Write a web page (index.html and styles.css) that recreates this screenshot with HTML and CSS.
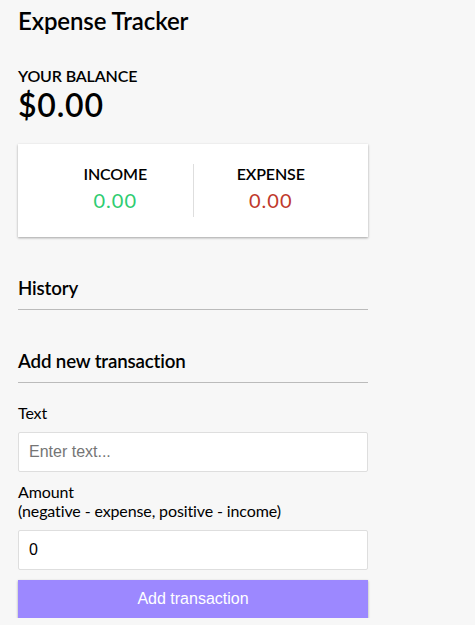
FILE: index.html
```html
<!DOCTYPE html>
<html lang="en">
<head>
  <meta charset="UTF-8" />
  <meta name="viewport" content="width=device-width, initial-scale=1.0" />
  <title>Expense Tracker</title>
  <link rel="stylesheet" href="styles.css">
</head>
<body>

  <div class="container">
    <h2>Expense Tracker</h2>

    <h4>Your Balance</h4>
    <h1 id="balance">$0.00</h1>

    <div class="inc-exp-container">
      <div>
        <h4>Income</h4>
        <p id="money-plus" class="money plus">0.00</p>
      </div>
      <div>
        <h4>Expense</h4>
        <p id="money-minus" class="money minus">0.00</p>
      </div>
    </div>

    <h3>History</h3>
    <ul id="list" class="list"></ul>

    <h3>Add new transaction</h3>
    <form id="form">
      <div class="form-control">
        <label for="text">Text</label>
        <input type="text" id="text" placeholder="Enter text..." />
      </div>
      <div class="form-control">
        <label for="amount">Amount <br />(negative - expense, positive - income)</label>
        <input type="number" id="amount" placeholder="Enter amount..." value="0" />
      </div>
      <button class="btn">Add transaction</button>
    </form>
  </div>

</body>
</html>
```

FILE: styles.css
```css
* {
  box-sizing: border-box;
}

body {
  background-color: #f7f7f7;
  margin: 0;
  font-family: 'Lato', sans-serif;
  color: #000;
}

.container {
  width: 350px;
  margin: 0 18px;
  padding-top: 6px;
}

h1,
h2,
h3,
h4 {
  font-weight: 600;
}

h1 {
  font-size: 32px;
  letter-spacing: 0.8px;
  margin: 0;
}

h2 {
  font-size: 24px;
  letter-spacing: -0.1px;
  margin: 0 0 31px;
}

h3 {
  font-size: 18.72px;
  letter-spacing: -0.15px;
  border-bottom: 1px solid #bbb;
  padding-bottom: 10px;
  margin: 40px 0 10px;
}

h4 {
  font-size: 16px;
  margin: 0;
  text-transform: uppercase;
  letter-spacing: -0.15px;
}

.inc-exp-container {
  background-color: #fff;
  box-shadow: 0 1px 3px rgba(0, 0, 0, 0.12), 0 1px 2px rgba(0, 0, 0, 0.24);
  padding: 20px;
  display: flex;
  justify-content: space-between;
  margin: 20px 0;
}

.inc-exp-container > div {
  flex: 1;
  text-align: center;
}

.inc-exp-container > div:first-of-type {
  border-right: 1px solid #dedede;
}

.money {
  font-size: 20px;
  letter-spacing: 1px;
  margin: 5px 0;
}

.money.plus {
  color: #2ecc71;
}

.money.minus {
  color: #c0392b;
}

.list {
  list-style-type: none;
  padding: 0;
  margin: 16px 0 40px;
}

label {
  display: inline-block;
  margin: 10px 0;
  font-size: 16px;
  letter-spacing: -0.12px;
}

input[type='text'],
input[type='number'] {
  border: 1px solid #dedede;
  border-radius: 2px;
  display: block;
  font-family: 'Liberation Sans', Arial, sans-serif;
  font-size: 16px;
  padding: 10px;
  width: 100%;
  background: #fff;
}

.btn {
  cursor: pointer;
  background-color: #9c88ff;
  box-shadow: 0 1px 3px rgba(0, 0, 0, 0.12), 0 1px 2px rgba(0, 0, 0, 0.24);
  color: #fff;
  border: 0;
  display: block;
  font-family: 'Liberation Sans', Arial, sans-serif;
  font-size: 16px;
  margin: 10px 0 0;
  padding: 10px;
  width: 100%;
}
```
